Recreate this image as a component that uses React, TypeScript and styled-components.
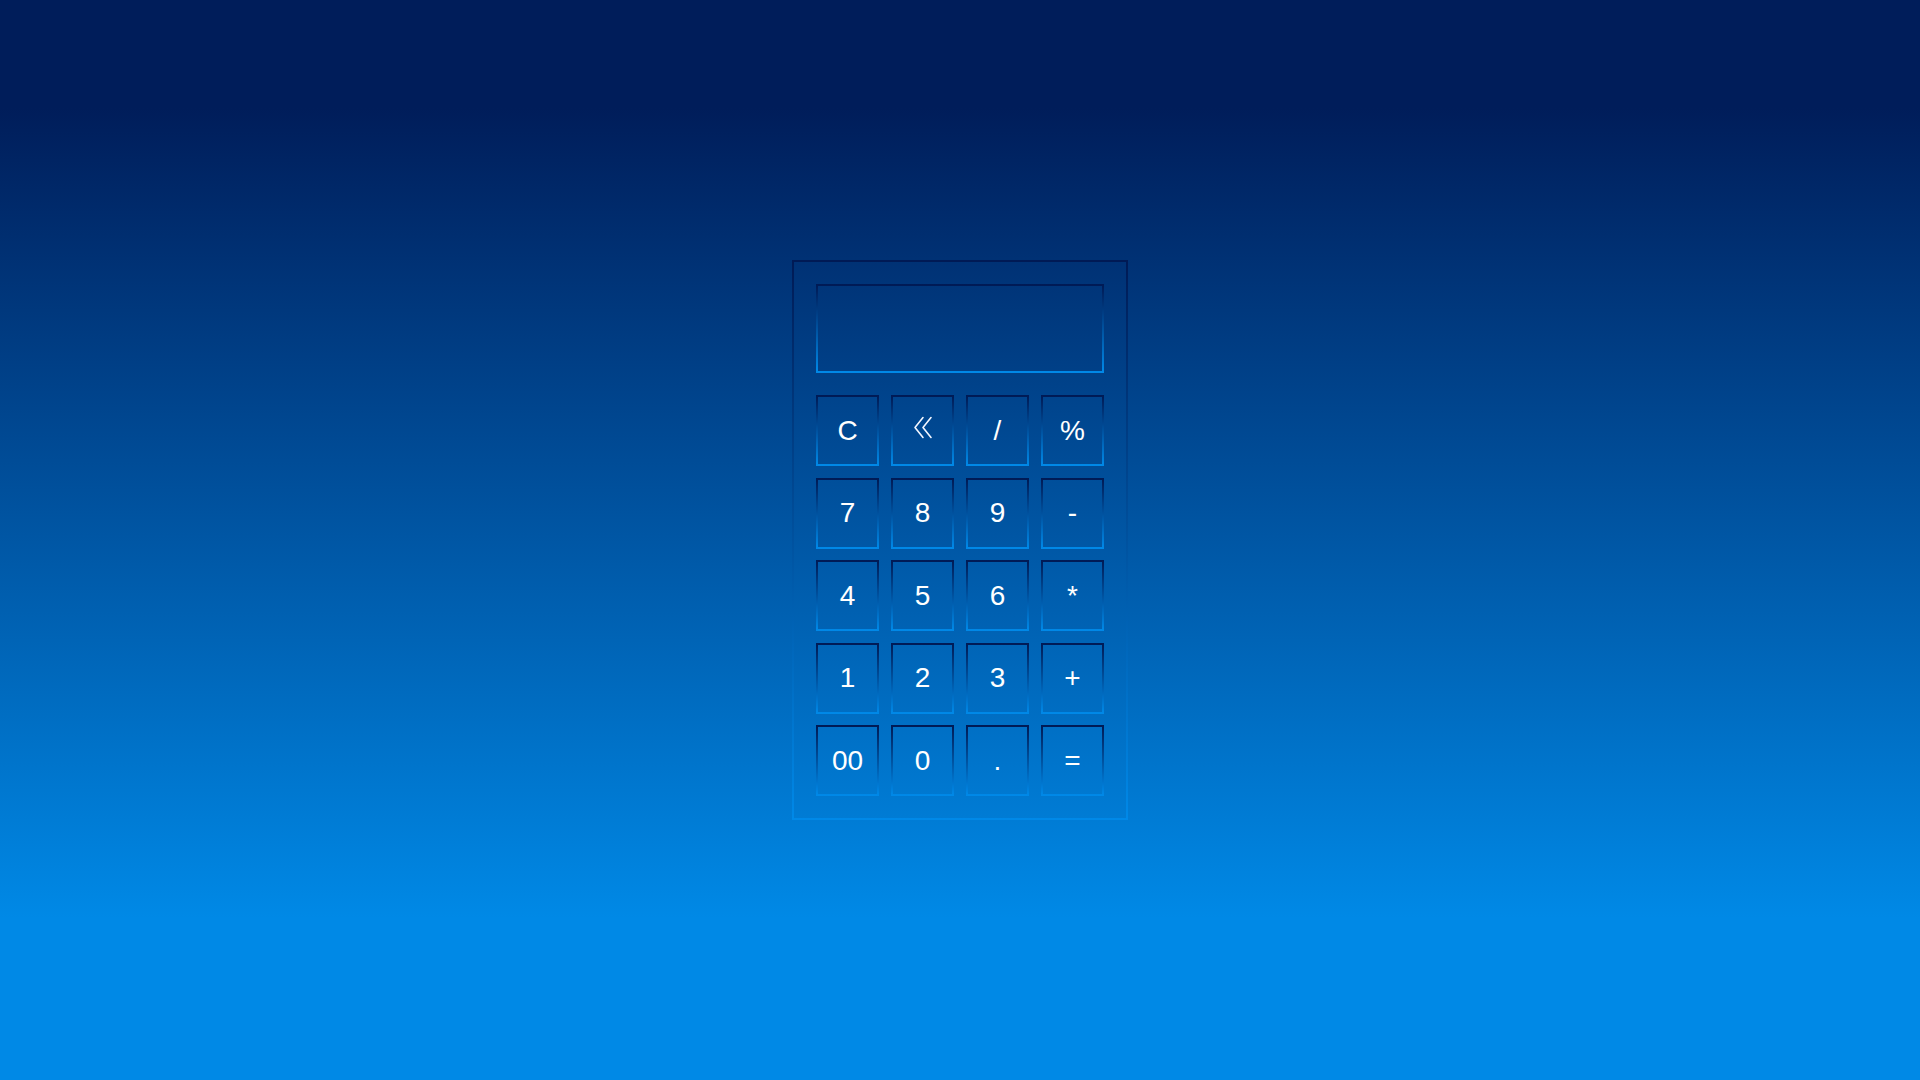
import React from "react";
import styled, { createGlobalStyle } from "styled-components";

const GlobalStyle = createGlobalStyle`
  html, body {
    margin: 0;
    padding: 0;
  }
  body {
    font-family: "Liberation Sans", Arial, sans-serif;
    background: linear-gradient(180deg, #001d5a 10%, #0089e6 85%);
    min-height: 100vh;
  }
`;

const Page = styled.main`
  min-height: 100vh;
  display: flex;
  align-items: center;
  justify-content: center;
`;

const gradientBorder = `
  border: 2px solid transparent;
  border-image: linear-gradient(180deg, #001a55 0%, #0089e8 100%) 1;
`;

const Calculator = styled.div`
  box-sizing: border-box;
  width: 336px;
  height: 560px;
  padding: 22px;
  display: flex;
  flex-direction: column;
  gap: 22px;
  ${gradientBorder}
`;

const Display = styled.div`
  box-sizing: border-box;
  height: 89px;
  ${gradientBorder}
  color: #fff;
  font-size: 32px;
  display: flex;
  align-items: center;
  justify-content: flex-end;
  padding: 0 12px;
`;

const Keys = styled.div`
  display: grid;
  grid-template-columns: repeat(4, 1fr);
  grid-auto-rows: 71px;
  column-gap: 12px;
  row-gap: 11.5px;
`;

const Key = styled.button`
  box-sizing: border-box;
  background: transparent;
  ${gradientBorder}
  color: #ffffff;
  font-family: "Liberation Sans", Arial, sans-serif;
  font-size: 28px;
  padding: 0;
  display: flex;
  align-items: center;
  justify-content: center;
  cursor: pointer;
`;

const BackIcon = styled.svg`
  width: 19px;
  height: 23px;
  margin-bottom: 6px;
`;

const Backspace = () => (
  <BackIcon viewBox="0 0 19 23" fill="none" stroke="#f2f6ff" strokeWidth={1.6} strokeLinecap="round" strokeLinejoin="round">
    <polyline points="10,1.5 2,11.5 10,21.5" />
    <polyline points="18,1.5 10,11.5 18,21.5" />
  </BackIcon>
);

const keys: (string | "back")[] = [
  "C", "back", "/", "%",
  "7", "8", "9", "-",
  "4", "5", "6", "*",
  "1", "2", "3", "+",
  "00", "0", ".", "=",
];

export default function App() {
  return (
    <>
      <GlobalStyle />
      <Page>
        <Calculator>
          <Display />
          <Keys>
            {keys.map((k, i) => (
              <Key key={i}>{k === "back" ? <Backspace /> : k}</Key>
            ))}
          </Keys>
        </Calculator>
      </Page>
    </>
  );
}
